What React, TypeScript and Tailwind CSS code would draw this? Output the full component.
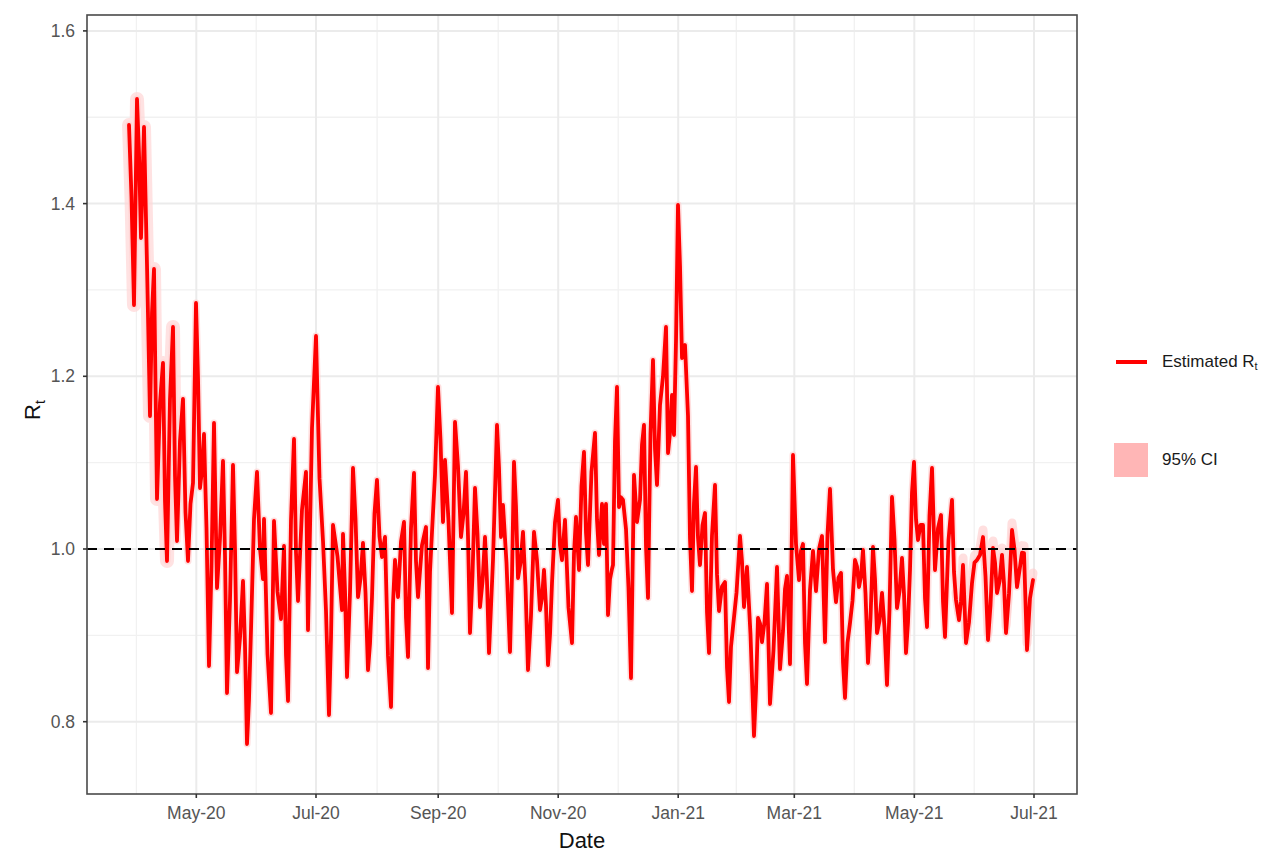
import React from "react";

// panel geometry, in page pixels
const L = 87;
const T = 15;
const R = 1077;
const B = 794;
const yOf = (v: number) => 549 - (v - 1) * 863.5;

const yMajor = [0.8, 1.0, 1.2, 1.4, 1.6];
const yMinor = [0.9, 1.1, 1.3, 1.5];
const months = [
  { x: 196.3, label: "May-20" },
  { x: 316.0, label: "Jul-20" },
  { x: 438.2, label: "Sep-20" },
  { x: 558.2, label: "Nov-20" },
  { x: 678.2, label: "Jan-21" },
  { x: 794.3, label: "Mar-21" },
  { x: 914.3, label: "May-21" },
  { x: 1034, label: "Jul-21" },
];
const xMinor = [136.4, 256.2, 377.1, 498.2, 618.2, 736.3, 854.3, 974.2];

// estimated Rt, traced in pixel coordinates
const pts: [number, number][] = [
  [129, 125], [134, 305], [137, 99], [141, 238], [144, 127], [147, 265], [150, 416],
  [154, 269], [157, 499], [163, 363], [167, 561], [173, 327], [177, 541], [183, 399],
  [188, 561], [193, 483], [196, 303], [200, 488], [204, 434], [209, 666], [214, 423],
  [217, 588], [223, 461], [227, 693], [233, 465], [237, 672], [243, 581], [247, 744],
  [251, 630], [257, 472], [263, 579], [264, 519], [271, 713], [274, 521], [281, 619],
  [284, 546], [288, 701], [294, 439], [298, 601], [306, 472], [308, 630], [316, 336],
  [323, 541], [329, 715], [333, 525], [342, 610], [343, 534], [347, 677], [353, 468],
  [358, 597], [363, 543], [368, 670], [372, 597], [377, 480], [382, 557], [385, 537],
  [391, 707], [395, 560], [398, 597], [404, 522], [408, 657], [414, 473], [418, 597],
  [426, 527], [428, 668], [432, 532], [438, 387], [443, 522], [445, 460], [452, 613],
  [455, 422], [461, 537], [466, 472], [470, 633], [475, 488], [480, 607], [485, 537],
  [489, 653], [497, 425], [501, 537], [503, 505], [510, 652], [514, 462], [518, 578],
  [523, 532], [528, 670], [534, 532], [540, 610], [544, 570], [548, 665], [552, 583],
  [558, 500], [562, 560], [565, 520], [572, 643], [576, 517], [579, 570], [584, 452],
  [588, 565], [595, 433], [599, 555], [602, 504], [604, 544], [606, 504], [608, 615],
  [612, 569], [613, 565], [617, 387], [619, 507], [623, 500], [626, 529], [631, 678],
  [634, 475], [637, 522], [640, 500], [644, 425], [648, 598], [653, 360], [657, 485],
  [660, 405], [666, 327], [668, 453], [672, 395], [674, 435], [678, 205], [682, 358],
  [685, 345], [688, 416], [692, 591], [696, 467], [700, 565], [705, 513], [709, 653],
  [715, 485], [719, 611], [725, 582], [729, 702], [733, 627], [740, 536], [744, 607],
  [747, 567], [754, 736], [758, 618], [762, 642], [767, 584], [770, 704], [777, 567],
  [780, 669], [783, 631], [787, 576], [790, 664], [793, 455], [799, 580], [803, 544],
  [807, 684], [813, 551], [816, 591], [822, 536], [825, 642], [830, 489], [836, 602],
  [841, 573], [845, 698], [850, 623], [855, 560], [859, 587], [863, 550], [868, 663],
  [873, 547], [877, 633], [882, 593], [887, 685], [892, 497], [897, 608], [902, 558],
  [906, 653], [910, 570], [914, 462], [918, 540], [923, 525], [927, 627], [932, 468],
  [935, 570], [941, 515], [945, 637], [952, 500], [956, 600], [959, 620], [963, 565],
  [966, 643], [972, 583], [977, 560], [983, 537], [988, 640], [993, 548], [997, 593],
  [1002, 555], [1006, 633], [1012, 530], [1017, 587], [1020, 567], [1024, 553],
  [1027, 650], [1033, 580],
];

// add the small day-to-day wobble between traced turning points
const dense: [number, number][] = [];
pts.forEach((p, i) => {
  const next = pts[i + 1];
  dense.push(p);
  if (next && next[0] - p[0] >= 4) {
    const dy = next[1] - p[1];
    const sign = i % 2 ? 1 : -1;
    dense.push([(p[0] + next[0]) / 2, p[1] + dy * 0.55 + sign * (Math.abs(dy) * 0.12 + 5)]);
  }
});

const toPath = (p: [number, number][]) =>
  p.map(([x, y], i) => `${i ? "L" : "M"}${x.toFixed(1)} ${y.toFixed(1)}`).join(" ");

const line = toPath(dense);
const early = toPath(dense.filter(([x]) => x <= 175));
const late = toPath(dense.filter(([x]) => x >= 955).map(([x, y]) => [x, y - 7] as [number, number]));

const Chart = () => (
  <svg className="w-[1090px] h-[867px] shrink-0" viewBox="0 0 1090 867">
    <defs>
      <clipPath id="panel">
        <rect x={L} y={T} width={R - L} height={B - T} />
      </clipPath>
    </defs>
    <rect x={L} y={T} width={R - L} height={B - T} fill="#fff" />
    {yMinor.map((v) => (
      <line key={v} x1={L} x2={R} y1={yOf(v)} y2={yOf(v)} stroke="#f1f1f1" strokeWidth={1.3} />
    ))}
    {xMinor.map((x) => (
      <line key={x} x1={x} x2={x} y1={T} y2={B} stroke="#f1f1f1" strokeWidth={1.3} />
    ))}
    {yMajor.map((v) => (
      <line key={v} x1={L} x2={R} y1={yOf(v)} y2={yOf(v)} stroke="#ebebeb" strokeWidth={2} />
    ))}
    {months.map((m) => (
      <line key={m.label} x1={m.x} x2={m.x} y1={T} y2={B} stroke="#ebebeb" strokeWidth={2} />
    ))}

    <g clipPath="url(#panel)" fill="none" strokeLinejoin="round" strokeLinecap="round">
      <path d={early} stroke="#ffd6d6" strokeWidth={14} opacity={0.7} />
      <path d={late} stroke="#ffcaca" strokeWidth={9} opacity={0.6} />
      <path d={line} stroke="#ffd2d2" strokeWidth={7} opacity={0.7} />
      <path d={line} stroke="#ff0000" strokeWidth={3.8} />
    </g>

    <line x1={L} x2={R} y1={549} y2={549} stroke="#000" strokeWidth={1.8} strokeDasharray="10 7" />
    <rect x={L} y={T} width={R - L} height={B - T} fill="none" stroke="#4a4a4a" strokeWidth={1.6} />

    {yMajor.map((v) => (
      <g key={v}>
        <line x1={L - 4} x2={L} y1={yOf(v)} y2={yOf(v)} stroke="#333" strokeWidth={1.6} />
        <text
          x={75}
          y={yOf(v) + 6}
          textAnchor="end"
          fontFamily="'Liberation Sans', Arial, sans-serif"
          fontSize={17.5}
          fill="#555"
        >
          {v.toFixed(1)}
        </text>
      </g>
    ))}
    {months.map((m) => (
      <g key={m.label}>
        <line x1={m.x} x2={m.x} y1={B} y2={B + 4} stroke="#333" strokeWidth={1.6} />
        <text
          x={m.x}
          y={819}
          textAnchor="middle"
          fontFamily="'Liberation Sans', Arial, sans-serif"
          fontSize={17.5}
          fill="#555"
        >
          {m.label}
        </text>
      </g>
    ))}

    <text
      x={582}
      y={848}
      textAnchor="middle"
      fontFamily="'Liberation Sans', Arial, sans-serif"
      fontSize={22}
      fill="#111"
    >
      Date
    </text>
    <text
      transform="translate(40 410) rotate(-90)"
      textAnchor="middle"
      fontFamily="'Liberation Sans', Arial, sans-serif"
      fontSize={22}
      fill="#111"
    >
      R
      <tspan fontSize={14} dy={5}>
        t
      </tspan>
    </text>
  </svg>
);

const Legend = () => (
  <div className="flex flex-col gap-[64px] pl-[24px] pt-[345px] font-['Liberation_Sans',Arial,sans-serif] text-[17px] text-[#1a1a1a]">
    <div className="flex items-center gap-[14px] h-[34px]">
      <div className="w-[34px] flex justify-center">
        <span className="block w-[31px] h-[3.5px] bg-[#ff0000]" />
      </div>
      <span>
        Estimated R<sub className="text-[11px]">t</sub>
      </span>
    </div>
    <div className="flex items-center gap-[14px] h-[34px]">
      <span className="block w-[34px] h-[34px] bg-[#ffb6b6]" />
      <span>95% CI</span>
    </div>
  </div>
);

export default function App() {
  return (
    <div className="w-[1283px] h-[867px] bg-white flex overflow-hidden">
      <Chart />
      <Legend />
    </div>
  );
}
